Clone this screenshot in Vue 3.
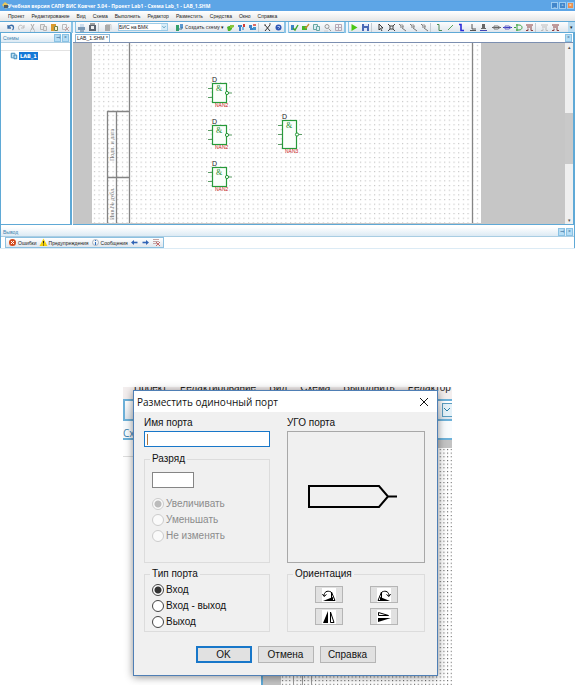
<script setup>
import { ref } from 'vue'

const menu = ['Проект', 'Редактирование', 'Вид', 'Схема', 'Выполнить', 'Редактор', 'Разместить', 'Средства', 'Окно', 'Справка']

const s = (d, c, w = 1) => ({ d, stroke: c, fill: 'none', w })
const f = (d, c) => ({ d, stroke: 'none', fill: c, w: 0 })

const sheets = (c, bg) => [f('M2 2h4v5h-4z', bg), s('M2.5 2.5h4v5h-4z', c), f('M5 4h4v5h-4z', bg), s('M5.5 4.5h3v4h-3z', c)]
const zoomMark = [s('M2 2l2 2M3 5h3v-1M5 6l4 3', '#777'), s('M3 3h3v3', '#999')]

const icons = {
  undo: [s('M3 3v3h3M3.500 5.500c1-3 5-3 5 0c0 1-.5 2-1 2.500', '#3b6ea8', 1.3)],
  redo: [s('M8 3v3h-3M7.500 5.500c-1-3-5-3-5 0c0 1 .5 2 1 2.500', '#bbb')],
  cut: [s('M4 2l3 6M7 2l-3 6M3 9h1M7 9h1', '#aaa')],
  copy: sheets('#b5b5b5', '#e8e8e8'),
  paste: [f('M2 2h5v7h-5z', '#d99a2b'), f('M5 4h4v5h-4z', '#fff3c8'), s('M5.500 4.500h3v4h-3z', '#6d7f49')],
  remove: [s('M2.500 2.500h4v5h-4z', '#bbb'), s('M5 5l4 4M9 5l-4 4', '#c4a5a5')],
  print: [f('M2 5h7v3h-7z', '#7b99b5'), f('M4 2h4v3h-4z', '#cde'), s('M4 9h4', '#4b7192')],
  camera: [f('M2 3h7v6h-7z', '#5d6570'), f('M4 4h3v3h-3z', '#eee'), s('M3 2h5', '#444')],
  pages: [f('M3 3h5v6h-5z', '#aaa'), s('M4 2.500h5v5', '#ccc')],
  scheme: [f('M2 3h3v6h-3z', '#37a06b'), f('M6 2h3v4h-3z', '#5b98cf'), s('M5 7h3v-2', '#346f9c')],
  add: [f('M2 5l2-1h3v3l-2 2h-2z', '#4fb52c'), f('M5 3h4v2l-2 1h-2z', '#8ac63c')],
  blockDel: [f('M2 3h4v2h-4zM3 5h2v4h-2z', '#3d83c7'), f('M7 2h2v3h-2z', '#d63d35'), f('M6 5h2v3h-2z', '#80b5df')],
  blockOut: [f('M2 3h3v3h-3zM3 6h3v2h-3z', '#3d83c7'), f('M6 5h3v3h-3z', '#4297d0'), s('M6 3h3', '#d63d35', 1.5)],
  tools: [s('M3 3l5 6M8 3l-5 6', '#333'), s('M7 2h2M2 3h2', '#555')],
  help: [f('M2.500 5.500a3 3 0 1 1 6 0a3 3 0 1 1 -6 0', '#3057b5'), s('M4.500 4.500h2v1l-1 1', '#dce8ff', 0.8)],
  check: [f('M2 3h3v5h-3z', '#3d83c7'), s('M4 6l2 2l3-5', '#3fa62b', 1.4)],
  mark: [f('M2 4h5v4h-5z', '#45b52c'), s('M5 5l1 1l3-4', '#c58f35', 1.3)],
  docs: sheets('#69a7a2', '#d9eef5'),
  find: [s('M3 4.500a2 2 0 1 1 4 0a2 2 0 1 1 -4 0M6.500 6.500l2.500 2.500', '#999'), s('M2 9h4', '#ccc')],
  table: [s('M2.500 2.500h6v6h-6zM2 5.500h7M5.500 3v6', '#b5a8b5')],
  play: [f('M2.500 2v7l6-3.500z', '#49c814')],
  save: [f('M2 2h7v7h-7z', '#4a69b5'), f('M4 2h4v2h-4zM4 6h3v3h-3z', '#dfe8fa')],
  cursor: [s('M4 2v6l1.500-1.500l1.500 2.500M4 2l4 4h-2', '#222', 0.9)],
  fit: [s('M4 4h3v3h-3zM2 2l2 2M9 2l-2 2M2 9l2-2M9 9l-2-2', '#444')],
  zoom: zoomMark,
  wire: [s('M3 2.500h2v6h3', '#4b8a55')],
  line: [s('M3 8l5-5', '#58a35b')],
  bus: [s('M3 2.500h2v6h3', '#2b2bd8', 1.6)],
  corner: [s('M5 2v5h4M3 8.500h6', '#555')],
  stamp: [f('M4 2h3v4h-3zM3 6h5v1h-5z', '#666'), s('M2 8.500h7', '#4646b3')],
  portGrey: [s('M1 5.500h9', '#666'), s('M3 4h4l2 1.500l-2 1.500h-4z', '#777')],
  portBlue: [s('M1 5.500h9', '#3d3dc0'), s('M3 4h4l2 1.500l-2 1.500h-4z', '#6767c8')],
  gate: [s('M3 3h3c4 0 4 5 0 5h-3M4 2v7M1 5.500h2', '#3ba23f')],
  net: [s('M2 3h7M3 5h5M2 8.500h2v-2M7 6v2.500h2', '#8a3f3f')],
  netGrey: [s('M2 3h7M3 5h5M2 8.500h2v-2M7 6v2.500h2', '#bbb')],
  error: [f('M2 5.500a3.500 3.500 0 1 1 7 0a3.500 3.500 0 1 1 -7 0', '#d44a1c'), s('M4 4l3 3M7 4l-3 3', '#fff')],
  warn: [f('M5.500 1.500l4 7.500h-8z', '#f5d20a'), s('M5.500 4v2.500M5.500 7.500v1', '#222')],
  info: [s('M2.500 5.500a3 3 0 1 1 6 0a3 3 0 1 1 -6 0', '#9aa6b5', 0.8), s('M5.500 5v3M5.500 3v1', '#2f6fc0')],
  left: [s('M4 5.500h4.500', '#2f63b5', 1.6), f('M2 5.500l3-2.500v5z', '#2f63b5')],
  right: [s('M2.500 5.500h4.500', '#2f63b5', 1.6), f('M9 5.500l-3-2.500v5z', '#2f63b5')],
  clear: [s('M2 2.500h6M2 4.500h6M2 6.500h4', '#c4a5a5'), s('M5 5l4 4M9 5l-4 4', '#c46b6b')]
}

const bars = {
  edit: ['undo', 'redo', 'cut', 'copy', 'paste', 'remove'],
  output: ['print', 'camera'],
  scheme: ['add', 'blockDel', 'blockOut'],
  help: ['tools', 'help'],
  verify: ['check', 'mark', 'docs', 'find', 'table'],
  run: ['play', 'save'],
  view: ['cursor', 'fit', 'zoom', 'zoom', 'zoom'],
  draw: ['wire', 'line', 'bus', 'corner', 'stamp'],
  ports: ['portGrey', 'portBlue', 'gate', 'net'],
  nets: ['netGrey', 'net']
}
const tail = [
  { bar: 'help', sep: 'thin' }, { bar: 'verify', sep: 'grip' }, { bar: 'run', sep: 'grip' },
  { bar: 'view', sep: 'thin' }, { bar: 'draw', sep: 'thin' }, { bar: 'ports', sep: 'space' }, { bar: 'nets', sep: 'thin' }
]

const gates = [
  { x: 120, y: 40, h: 19, pins: [5, 14], name: 'NAN2' },
  { x: 120, y: 82, h: 19, pins: [5, 14], name: 'NAN2' },
  { x: 120, y: 124, h: 19, pins: [5, 14], name: 'NAN2' },
  { x: 190, y: 77, h: 28, pins: [5, 14, 24], name: 'NAN3' }
]

const portName = ref('')
const bit = ref('')
const step = ref('Увеличивать')
const kind = ref('Вход')
const steps = ['Увеличивать', 'Уменьшать', 'Не изменять']
const kinds = ['Вход', 'Вход - выход', 'Выход']
const turns = [
  { name: 'Повернуть влево', paths: [f('M1 13h10v-4z', '#000'), s('M9.500 4v8.500h3.500z', '#000'), s('M2 8c0-4 3-6 7-4M0.500 6l1.500 2.500l2.500-2', '#000')] },
  { name: 'Повернуть вправо', paths: [f('M3 13h10l-10-4z', '#000'), s('M4.500 4v8.500h-3.500z', '#000'), s('M5 4c4-2 7 0 7 4M9.500 6.500l2.500 2l1.500-2.500', '#000')] },
  { name: 'Отразить по горизонтали', paths: [f('M1 13l5-12v12z', '#000'), s('M8.500 2v10.500h3.500z', '#000')] },
  { name: 'Отразить по вертикали', paths: [f('M1 8h13l-13 4z', '#000'), s('M1.500 2.500v3h10z', '#000')] }
]
</script>

<template>
  <main class="page">
    <section class="app">
      <header class="title">
        <svg class="ico" viewBox="0 0 11 11"><path d="M2 5l3-3l4 3l-3 4z" fill="#e9c75b" /><path d="M4 5h4v3h-4z" fill="#4d5d69" /></svg>
        <h1>Учебная версия САПР БИС Ковчег 3.04 - Проект Lab1 - Схема Lab_1 - LAB_1.SHM</h1>
        <button class="win" aria-label="Свернуть">_</button>
        <button class="win" aria-label="Развернуть">▫</button>
        <button class="win close" aria-label="Закрыть">×</button>
      </header>
      <nav class="menu">
        <a v-for="m in menu" :key="m" href="#">{{ m }}</a>
      </nav>
      <div class="tools">
        <button v-for="i in bars.edit" :key="i" class="tool" :aria-label="i">
          <svg viewBox="0 0 11 11"><path v-for="(p, k) in icons[i]" :key="k" :d="p.d" :fill="p.fill" :stroke="p.stroke" :stroke-width="p.w" /></svg>
        </button>
        <i class="grip"></i>
        <button v-for="i in bars.output" :key="i" class="tool" :aria-label="i">
          <svg viewBox="0 0 11 11"><path v-for="(p, k) in icons[i]" :key="k" :d="p.d" :fill="p.fill" :stroke="p.stroke" :stroke-width="p.w" /></svg>
        </button>
        <i class="thin"></i>
        <button class="tool" aria-label="pages">
          <svg viewBox="0 0 11 11"><path v-for="(p, k) in icons.pages" :key="k" :d="p.d" :fill="p.fill" :stroke="p.stroke" :stroke-width="p.w" /></svg>
        </button>
        <span class="combo">
          <select aria-label="Тип проекта"><option>БИС на БМК</option></select>
          <svg viewBox="0 0 6 8"><path d="M1 3l2 2l2-2" fill="none" stroke="#2d7fa6" /></svg>
        </span>
        <button class="create">
          <svg class="ico" viewBox="0 0 11 11"><path v-for="(p, k) in icons.scheme" :key="k" :d="p.d" :fill="p.fill" :stroke="p.stroke" :stroke-width="p.w" /></svg>
          <span>Создать схему ▾</span>
        </button>
        <button v-for="i in bars.scheme" :key="i" class="tool" :aria-label="i">
          <svg viewBox="0 0 11 11"><path v-for="(p, k) in icons[i]" :key="k" :d="p.d" :fill="p.fill" :stroke="p.stroke" :stroke-width="p.w" /></svg>
        </button>
        <template v-for="t in tail" :key="t.bar">
          <i :class="t.sep"></i>
          <button v-for="(i, n) in bars[t.bar]" :key="n" class="tool" :aria-label="i">
            <svg viewBox="0 0 11 11"><path v-for="(p, k) in icons[i]" :key="k" :d="p.d" :fill="p.fill" :stroke="p.stroke" :stroke-width="p.w" /></svg>
          </button>
        </template>
        <button class="more" aria-label="Ещё">▾</button>
      </div>
      <div class="middle">
        <aside class="tree">
          <div class="panel-head"><span>Схемы</span><button class="mini" aria-label="Закрепить">⊣</button><button class="mini" aria-label="Закрыть">×</button></div>
          <div class="tree-top"></div>
          <a class="node" href="#">
            <svg viewBox="0 0 11 11"><path v-for="(p, k) in sheets('#3a86b8', '#bfe0f2')" :key="k" :d="p.d" :fill="p.fill" :stroke="p.stroke" :stroke-width="p.w" /></svg>
            <b>LAB_1</b>
          </a>
        </aside>
        <div class="editor">
          <div class="tabs"><button class="tab">LAB_1.SHM *</button><button class="mini" aria-label="Закрыть вкладку">×</button></div>
          <div class="canvas">
            <svg class="sheet" width="389" height="180" viewBox="0 0 389 180">
              <defs>
                <pattern id="dots" width="4.67" height="4.67" patternUnits="userSpaceOnUse"><rect x="2" y="2" width="1" height="1" fill="#b0b0b0" /></pattern>
              </defs>
              <rect width="389" height="180" fill="#fff" />
              <rect width="389" height="180" fill="url(#dots)" />
              <path d="M37.500 0v180M380.500 0v180M15 68.500h23M15 134.500h23M15.500 68v112M24.500 68v112" fill="none" stroke="#858585" stroke-width="1.300" />
              <text class="stamp" transform="translate(22 118) rotate(-90)">Подп. и дата</text>
              <text class="stamp" transform="translate(22 177) rotate(-90)">Инв.№ дубл.</text>
              <g v-for="(g, n) in gates" :key="n" :transform="`translate(${g.x} ${g.y})`">
                <rect x="0.500" y="0.500" width="14" :height="g.h" fill="#fbfffb" stroke="#279a3a" stroke-width="1.200" />
                <path v-for="p in g.pins" :key="p" :d="`M-4 ${p + 0.5}h4`" stroke="#5d9d66" />
                <path :d="`M16 ${g.h / 2 + 0.5}h4`" stroke="#5d9d66" />
                <circle cx="15" :cy="g.h / 2 + 0.5" r="1.600" fill="#fff" stroke="#279a3a" />
                <text class="ref" x="0" y="-1">D</text>
                <text class="amp" x="4" y="8">&amp;</text>
                <text class="kind" x="3" :y="g.h + 5">{{ g.name }}</text>
              </g>
            </svg>
            <div class="scroll"><i>▴</i><span></span><i>▾</i></div>
          </div>
        </div>
      </div>
      <footer class="output">
        <div class="panel-head"><span>Вывод</span><button class="mini" aria-label="Закрепить">⊣</button><button class="mini" aria-label="Закрыть">×</button></div>
        <div class="messages">
          <button v-for="m in [['error', 'Ошибки'], ['warn', 'Предупреждения'], ['info', 'Сообщения']]" :key="m[0]" class="msg">
            <svg class="ico" viewBox="0 0 11 11"><path v-for="(p, k) in icons[m[0]]" :key="k" :d="p.d" :fill="p.fill" :stroke="p.stroke" :stroke-width="p.w" /></svg>
            <span>{{ m[1] }}</span>
          </button>
          <button v-for="i in ['left', 'right', 'clear']" :key="i" class="tool" :aria-label="i">
            <svg viewBox="0 0 11 11"><path v-for="(p, k) in icons[i]" :key="k" :d="p.d" :fill="p.fill" :stroke="p.stroke" :stroke-width="p.w" /></svg>
          </button>
        </div>
      </footer>
    </section>

    <section class="scene">
      <div class="behind">
        <div class="b-menu"><span v-for="m in menu.slice(0, 6)" :key="m">{{ m }}</span></div>
        <div class="b-tools"><svg viewBox="0 0 10 14"><rect x="0.500" y="0.500" width="12" height="13" fill="#e4f1f8" stroke="#5b9dc0" /><path d="M2 5l3 3l3-3" fill="none" stroke="#2d7fa6" /></svg></div>
        <div class="b-head">Сх</div>
        <div class="b-body">
          <div class="b-tree"></div>
          <div class="b-sheet">
            <svg width="100%" height="100%">
              <defs>
                <pattern id="grid" width="3.67" height="3.67" patternUnits="userSpaceOnUse"><rect x="1" y="1" width="1" height="1" fill="#404040" /></pattern>
              </defs>
              <rect width="100%" height="100%" fill="url(#grid)" />
              <path d="M12.500 0v240M21.500 0v240M30.500 0v240" fill="none" stroke="#999" />
            </svg>
          </div>
        </div>
      </div>
      <form class="dialog" @submit.prevent>
        <header class="d-title">
          <h2>Разместить одиночный порт</h2>
          <button type="button" aria-label="Закрыть"><svg viewBox="0 0 10 10"><path d="M1 1l8 8M9 1l-8 8" stroke="#111" fill="none" /></svg></button>
        </header>
        <div class="d-body">
          <div class="left">
            <label for="pname">Имя порта</label>
            <span class="name"><i></i><input id="pname" v-model="portName" type="text" /></span>
            <fieldset class="grow">
              <legend>Разряд</legend>
              <input v-model="bit" class="bit" type="text" aria-label="Разряд" />
              <label v-for="o in steps" :key="o" class="radio off"><input v-model="step" type="radio" name="step" :value="o" disabled />{{ o }}</label>
            </fieldset>
          </div>
          <div class="right">
            <span class="label">УГО порта</span>
            <div class="preview">
              <svg viewBox="0 0 92 26"><path d="M2 2h70l9 10.500l-9 10.500h-70zM81 12.500h9" fill="none" stroke="#000" stroke-width="2" /></svg>
            </div>
          </div>
          <fieldset class="kinds">
            <legend>Тип порта</legend>
            <label v-for="o in kinds" :key="o" class="radio"><input v-model="kind" type="radio" name="kind" :value="o" />{{ o }}</label>
          </fieldset>
          <fieldset class="orient">
            <legend>Ориентация</legend>
            <div class="turns">
              <button v-for="t in turns" :key="t.name" type="button" class="turn" :aria-label="t.name">
                <svg viewBox="0 0 14 14"><path v-for="(p, k) in t.paths" :key="k" :d="p.d" :fill="p.fill" :stroke="p.stroke" :stroke-width="p.w" /></svg>
              </button>
            </div>
          </fieldset>
        </div>
        <div class="actions">
          <button class="ok">OK</button>
          <button type="button">Отмена</button>
          <button type="button">Справка</button>
        </div>
      </form>
    </section>
  </main>
</template>

<style>
body { margin: 0; background: #fff; }
</style>

<style scoped>
* { box-sizing: border-box; }
button, input, select { font: inherit; color: inherit; margin: 0; padding: 0; border: 0; background: none; border-radius: 0; }
a { color: inherit; text-decoration: none; }
i { font-style: normal; }
svg { display: block; flex: none; }
.page { font-family: "Open Sans", "Noto Sans", sans-serif; color: #222; }
.app { font-size: 5px; line-height: 8px; border-bottom: 1px solid #dcebf5; }
.ico { width: 11px; height: 11px; }
.title { display: flex; align-items: center; height: 11px; background: #5da5e6; color: #fff; padding-right: 1px; }
.title .ico { margin-right: -3px; }
.title h1 { flex: 1; margin: 0; font: bold 5px/10px "Open Sans", sans-serif; white-space: nowrap; }
.win { width: 7px; height: 7px; margin-left: 1px; background: #4387cb; border: 1px solid #9cccf2; line-height: 5px; text-align: center; }
.win.close { background: #e98f4f; }
.menu { display: flex; gap: 7px; height: 10px; padding-left: 8px; line-height: 10px; font-family: "Liberation Sans", sans-serif; background: linear-gradient(#fff, #e6e6e6); white-space: nowrap; }
.tools { display: flex; align-items: center; height: 12px; padding-left: 5px; background: linear-gradient(#fcfdfe, #dfe6ed); border-top: 1px solid #5fa9d6; border-bottom: 1px solid #5fa9d6; white-space: nowrap; }
.tool { width: 11px; height: 11px; flex: none; }
.tool svg { width: 11px; height: 11px; }
.grip, .thin, .space { flex: none; height: 11px; width: 5px; }
.grip { border-left: 2px solid #8cc4e6; border-right: 1px solid #8cc4e6; background: #eef7fd; }
.thin { width: 4px; height: 9px; border-left: 1px solid #c3cbd2; }
.space { width: 2px; }
.combo { display: flex; align-items: center; flex: none; width: 50px; height: 8px; margin: 0 6px 0 5px; background: #fff; border: 1px solid #9ccbe6; }
.combo select { appearance: none; flex: 1; min-width: 0; height: 6px; line-height: 6px; font-family: "Liberation Sans", sans-serif; }
.combo svg { width: 6px; height: 6px; background: #d7edf9; }
.create { display: flex; align-items: center; flex: none; width: 51px; height: 10px; }
.more { margin-left: auto; width: 7px; height: 10px; background: #b9dcf2; }
.middle { display: flex; height: 192px; }
.tree { width: 72px; flex: none; border-left: 1px solid #5fa9d6; border-right: 2px solid #5fa9d6; border-bottom: 1px solid #5fa9d6; }
.panel-head { display: flex; align-items: center; height: 10px; padding-left: 2px; background: linear-gradient(#fff, #dceaf4); color: #3c81ad; border-bottom: 1px solid #a9cde3; }
.panel-head span { flex: 1; font-family: "Liberation Sans", sans-serif; }
.mini { width: 7px; height: 8px; margin-right: 1px; background: #b5ddf5; border: 1px solid #8ac2e4; line-height: 5px; text-align: center; color: #1c5e8c; }
.tree-top { height: 8px; border-bottom: 1px solid #e2e2e2; }
.node { display: flex; align-items: center; padding: 0 0 0 8px; }
.node svg { width: 10px; height: 10px; }
.node b { background: #1478d7; color: #fff; font: bold 5px/8px "DejaVu Sans", sans-serif; padding: 0 1px; }
.editor { flex: 1; min-width: 0; display: flex; flex-direction: column; border-right: 2px solid #5fa9d6; border-bottom: 1px solid #5fa9d6; margin-left: 1px; }
.tabs { display: flex; justify-content: space-between; align-items: center; height: 10px; border-bottom: 1px solid #7c8fb0; padding-left: 2px; }
.tab { height: 8px; padding: 0 1px; border: 1px solid #8ab9da; border-bottom: 0; line-height: 7px; font-family: "Liberation Sans", sans-serif; white-space: nowrap; }
.canvas { flex: 1; min-height: 0; display: flex; padding-left: 19px; background: #c6c6c6; overflow: hidden; }
.scroll { margin-left: auto; width: 8px; background: #efefef; display: flex; flex-direction: column; text-align: center; color: #555; }
.scroll i { height: 8px; line-height: 8px; }
.scroll span { margin: 62px 0 auto; height: 51px; background: #c9c9c9; }
.stamp { font: 6px "Liberation Serif", serif; fill: #777; }
.ref { font: 7px "Liberation Sans", sans-serif; fill: #222; }
.amp { font: 8px "Liberation Serif", serif; fill: #178a2a; }
.kind { font: 5px "Liberation Sans", sans-serif; fill: #c22; }
.output { border-left: 1px solid #5fa9d6; border-right: 1px solid #5fa9d6; padding-top: 2px; }
.messages { display: inline-flex; align-items: center; vertical-align: top; height: 11px; margin-left: 4px; padding: 0 1px; background: linear-gradient(#fff, #dfe6ed); border: 1px solid #8cc0e0; }
.msg { display: flex; align-items: center; margin-right: 1px; font-family: "Liberation Sans", sans-serif; white-space: nowrap; }

.scene { display: grid; width: min(329px, 100%); margin: 138px auto 0; }
.behind, .dialog { grid-area: 1 / 1; min-width: 0; }
.behind { display: flex; flex-direction: column; height: 298px; overflow: hidden; font-size: 10px; }
.b-menu { display: flex; align-items: flex-start; gap: 13px; height: 12px; padding-left: 11px; font: 10px/12px "Liberation Sans", sans-serif; background: #f3eeee; white-space: nowrap; overflow: hidden; }
.b-menu span { margin-top: -5px; }
.b-tools { display: flex; justify-content: flex-end; align-items: center; height: 22px; flex: none; background: linear-gradient(#fff, #dfe6ed); border: 2px solid #6db1d9; border-right: 0; }
.b-tools svg { width: 10px; height: 14px; }
.b-head { height: 19px; flex: none; line-height: 24px; color: #3c81ad; border-bottom: 2px solid #6db1d9; background: #f8fbfd; }
.b-body { flex: 1; min-height: 0; display: flex; }
.b-tree { width: 140px; margin-top: 16px; border-top: 1px solid #ddd; border-right: 2px solid #5fa9d6; }
.b-sheet { flex: 1; min-width: 0; border-left: 18px solid #c3c3c3; border-top: 8px solid #c3c3c3; background: #fff; overflow: hidden; }
.dialog { margin: 3px 14px 9px 10px; background: #f0f0f0; border: 1px solid #4f7fb5; box-shadow: 0 1px 8px rgba(0, 0, 0, 0.45); font: 10px/12px "Liberation Sans", sans-serif; color: #111; }
.d-title { display: flex; align-items: center; height: 21px; padding: 0 8px 0 3px; background: #fff; }
.d-title h2 { flex: 1; margin: 0; font: 10px/12px "Open Sans", sans-serif; white-space: nowrap; }
.d-title button { width: 10px; height: 10px; }
.d-title svg { width: 10px; height: 10px; }
.d-body { display: grid; grid-template-columns: minmax(0, 126fr) minmax(0, 138fr); column-gap: 17px; row-gap: 5px; padding: 5px 12px 0 10px; }
.left, .right { display: flex; flex-direction: column; height: 146px; }
.name { display: flex; align-items: center; height: 16px; margin: 2px 0 6px; background: #fff; border: 1px solid #1877c9; padding: 1px 2px; flex: none; }
.name i { width: 1px; height: 11px; background: #b0763c; }
.name input { flex: 1; min-width: 0; outline: 0; }
fieldset { margin: 0; padding: 0 7px; border: 1px solid #dcdcdc; min-width: 0; }
legend { padding: 0 2px; margin-left: -2px; }
.grow { flex: 1; }
.bit { display: block; width: 42px; height: 16px; margin: 7px 0 8px; border: 1px solid #858585; background: #fff; }
.radio { display: flex; align-items: center; gap: 2px; height: 16px; }
.radio input { appearance: none; width: 12px; height: 12px; flex: none; border: 1px solid #444; border-radius: 50%; background: #fff; }
.radio input:checked { background: radial-gradient(circle, #333 3px, #fff 4px); }
.radio.off { color: #8c8c8c; }
.radio.off input { border-color: #ccc; background: #fafafa; }
.radio.off input:checked { background: radial-gradient(circle, #bbb 3px, #fafafa 4px); }
.preview { flex: 1; margin-top: 2px; display: flex; align-items: center; justify-content: center; border: 1px solid #a8a8a8; }
.preview svg { width: 92px; height: 26px; margin-left: -6px; }
.kinds, .orient { height: 64px; }
.kinds .radio:first-of-type { margin-top: 2px; }
.turns { display: grid; grid-template-columns: 28px 28px; gap: 5px 27px; justify-content: center; padding-top: 6px; }
.turn { display: flex; justify-content: center; align-items: center; height: 17px; background: #e1e1e1; border: 1px solid #b5b5b5; }
.turn svg { width: 14px; height: 14px; background: #fff; }
.actions { display: flex; justify-content: center; gap: 6px; padding: 14px 0 12px; }
.actions button { width: 56px; height: 17px; background: #e1e1e1; border: 1px solid #b5b5b5; text-align: center; }
.actions .ok { border: 2px solid #1877c9; }
</style>
